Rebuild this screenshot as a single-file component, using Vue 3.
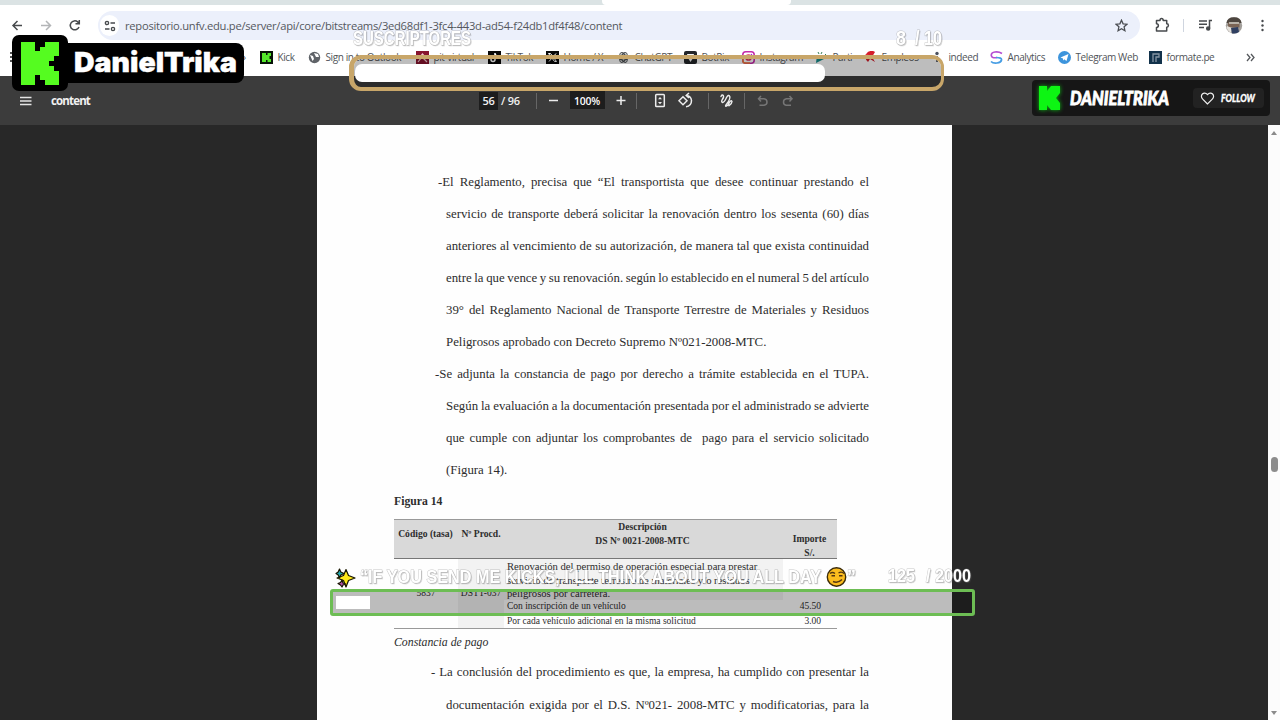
<template>
  <div class="screen">
    <div class="tab-strip"><div class="active-tab"></div></div>

    <header class="browser">
      <div class="nav-row">
        <svg class="nav-icons" width="98" height="40" viewBox="0 0 98 40" fill="none" stroke-width="1.5">
          <path d="M22 20.500H13M17.500 16L13 20.500L17.500 25" stroke="#474a4d" />
          <path d="M41 20.500H50.500M46 16L50.500 20.500L46 25" stroke="#b3b5b7" />
          <path d="M79 22A4.500 4.500 0 1 1 77.700 16.900L79 18.300M79.300 15V18.700H75.500" stroke="#474a4d" />
        </svg>
        <div class="address">
          <span class="site-info">
            <svg width="12" height="12" viewBox="0 0 12 12" fill="none" stroke="#474a4d" stroke-width="1.400">
              <circle cx="3" cy="3" r="1.600" /><path d="M6.500 3H11M1 9H5.500" /><circle cx="9" cy="9" r="1.600" />
            </svg>
          </span>
          <span class="url">repositorio.unfv.edu.pe/server/api/core/bitstreams/3ed68df1-3fc4-443d-ad54-f24db1df4f48/content</span>
          <svg class="star" width="13" height="13" viewBox="0 0 13 13" fill="none" stroke="#4a4d52" stroke-width="1.300">
            <path d="M6.500 1.200L8.100 4.800L12 5.200L9.100 7.800L9.900 11.700L6.500 9.700L3.100 11.700L3.900 7.800L1 5.200L4.900 4.800Z" />
          </svg>
        </div>
        <svg class="tools" width="140" height="40" viewBox="0 0 140 40" fill="none" stroke="#474a4d" stroke-width="1.500">
          <path d="M16.500 15.500H20C20 12.900 23.200 12.900 23.200 15.500H26.700V18.800C29 18.800 29 22.200 26.700 22.200V26H16.500V22.500C19 22.500 19 18.700 16.500 18.700Z" stroke-linejoin="round" />
          <path d="M43.500 14V27" stroke="#cfd5df" stroke-width="1" />
          <path d="M59 16H67M59 19.300H67M59 22.600H64M69.500 23V15.500H72" />
          <circle cx="68.200" cy="23.500" r="1.500" fill="#474a4d" />
          <g stroke="none">
            <circle cx="94" cy="20.500" r="8.200" fill="#a39f9b" />
            <path d="M86.500 18Q87 12.300 94 12.300T101.500 18Z" fill="#4d453f" />
            <rect x="88" y="17.500" width="11.500" height="5" fill="#7b6455" />
            <path d="M87 21L92 23L91 28Q88 26 86.500 23Z" fill="#e5e2dc" />
            <path d="M91 23L98 22L99 27Q96 29 92 28.500Z" fill="#303f61" />
            <path d="M89 17H99V19H89Z" fill="#b9b2a8" />
            <circle cx="122.500" cy="16" r="1.200" fill="#474a4d" />
            <circle cx="122.500" cy="20.500" r="1.200" fill="#474a4d" />
            <circle cx="122.500" cy="25" r="1.200" fill="#474a4d" />
          </g>
        </svg>
      </div>

      <nav class="bookmarks">
        <span class="apps"></span>
        <span class="hidden-mark">›</span>
        <a v-for="b in bookmarks" :key="b.name" class="bookmark" :style="{ width: b.width + 'px' }">
          <svg class="favicon" viewBox="0 0 13 13">
            <template v-if="b.icon === 'kick'">
              <rect width="13" height="13" fill="#071307" />
              <path d="M2 2H6V4H7.500V2H11V5H9.500V8H11V11H7.500V9H6V11H2Z" fill="#53e72a" />
            </template>
            <template v-else-if="b.icon === 'globe'">
              <circle cx="6.500" cy="6.500" r="5.700" fill="#5f6368" />
              <path d="M2 4L5 5L6 8L4.500 10ZM6 2L10 3L11 6L8 6L7 4Z" fill="#fff" />
            </template>
            <template v-else-if="b.icon === 'pit'">
              <rect width="13" height="13" fill="#87142e" />
              <path d="M2 11L6 6L11 11M4 6L6.500 3L9 6" fill="none" stroke="#f0c4ce" stroke-width="1.200" />
            </template>
            <template v-else-if="b.icon === 'tiktok'">
              <rect width="13" height="13" fill="#080808" />
              <path d="M7 2V8.500A2 2 0 1 1 5 6.500M7 3Q8 5 10 5" fill="none" stroke="#fff" stroke-width="1.500" />
            </template>
            <template v-else-if="b.icon === 'x'">
              <rect width="13" height="13" fill="#080808" />
              <path d="M2.500 2.500H4.500L10.500 10.500H8.500ZM10 2.500L3 10.500" fill="none" stroke="#fff" />
            </template>
            <g v-else-if="b.icon === 'gpt'" fill="none" stroke="#44484b">
              <ellipse v-for="r in [0, 60, 120]" :key="r" cx="6.500" cy="6.500" rx="5.300" ry="2.600" :transform="`rotate(${r} 6.500 6.500)`" />
            </g>
            <template v-else-if="b.icon === 'botrix'">
              <rect width="13" height="13" rx="2" fill="#232529" />
              <path d="M3 3H10L9 7L6.500 11L4 7Z" fill="#f4f4f4" />
            </template>
            <template v-else-if="b.icon === 'instagram'">
              <rect x=".8" y=".8" width="11.400" height="11.400" rx="3" fill="#fff" stroke="#c52cab" stroke-width="1.600" />
              <path d="M1 8V10Q1 12 3 12H8" fill="none" stroke="#f48134" stroke-width="1.500" />
              <circle cx="6.500" cy="6.500" r="2.600" fill="none" stroke="#de315d" stroke-width="1.500" />
              <circle cx="9.500" cy="3.500" r=".7" fill="#9c2de0" />
            </template>
            <template v-else-if="b.icon === 'parti'">
              <path d="M2 4L9 8L1 12Z" fill="#168d8c" />
              <path d="M6 3L7 1M8 6L11 3M4 3L3 1" stroke="#397f59" />
            </template>
            <template v-else-if="b.icon === 'empleos'">
              <path d="M11 1A5.500 5.500 0 0 0 4 11L6 8L11 11L8 6Z" fill="#d51c2b" />
              <circle cx="3" cy="5" r="2" fill="#e13038" />
            </template>
            <template v-else-if="b.icon === 'indeed'">
              <circle cx="6" cy="2.500" r="1.700" fill="#4c5260" />
              <path d="M6 5V11" fill="none" stroke="#4c5260" stroke-width="1.700" />
            </template>
            <template v-else-if="b.icon === 'analytics'">
              <path d="M12 2.500Q9 .5 5 1T1.300 4.500T7 6.500" fill="none" stroke="#b54ed3" stroke-width="1.700" />
              <path d="M6 6.500Q12 6.500 11.500 9T7 12T1 10.500" fill="none" stroke="#469de4" stroke-width="1.700" />
            </template>
            <template v-else-if="b.icon === 'telegram'">
              <circle cx="6.500" cy="6.500" r="6.500" fill="#3c94dc" />
              <path d="M2.500 6.500L10.500 3L8.500 10L6.200 8.300L5 9.500V7.500Z" fill="#fff" />
            </template>
            <template v-else>
              <rect width="13" height="13" fill="#12324b" />
              <path d="M4 11V3H10V6H7V11" fill="none" stroke="#8796a5" stroke-width="1.300" />
            </template>
          </svg>
          <span>{{ b.name }}</span>
        </a>
        <svg class="more" width="9" height="9" viewBox="0 0 9 9" fill="none" stroke="#55585c" stroke-width="1.300">
          <path d="M1 1L4 4.500L1 8M5 1L8 4.500L5 8" />
        </svg>
      </nav>
    </header>

    <section class="pdf-bar">
      <svg class="menu" width="12" height="10" viewBox="0 0 12 10" stroke="#e4e4e4" stroke-width="1.500">
        <path d="M0 1.500H11.500M0 5H11.500M0 8.500H11.500" />
      </svg>
      <b class="doc-name">content</b>
      <div class="page-tools">
        <span class="field page-field">56</span>
        <span class="total">/ 96</span>
        <svg width="320" height="26" viewBox="0 0 320 26" fill="none" stroke="#ededed" stroke-width="1.500">
          <g stroke="#666" stroke-width="1"><path d="M8.500 5V21M108.500 5V21M180.500 5V21M216.500 5V21" /></g>
          <path d="M21 12.500H30M88.500 12.500H97.500M93 8V17" />
          <rect x="42" y="3" width="35" height="18" fill="#1d1d1d" stroke="none" />
          <text class="zoom-value" x="46" y="17" textLength="26" lengthAdjust="spacingAndGlyphs">100%</text>
          <rect x="127.700" y="6.500" width="8.600" height="12" rx=".8" />
          <path d="M130 11.200L132 9L134 11.200ZM130 14L134 14L132 16.200Z" fill="#ededed" stroke="none" />
          <path d="M155 8.800L159 12.800L155 16.800L151 12.800Z" />
          <path d="M158.500 7.500Q163 8 163.500 12.500Q163.500 18 158 18.700M161 5L158.200 7.500L161 10" />
          <path d="M193 8.500Q194 6 195.300 7.500Q196.200 9 194.300 11.500Q193 14 194.500 14.500Q196.400 14.500 198.500 9.500Q200.500 6 201.800 8.500Q202.400 11 199 15.500Q197 18 197.800 18.200Q200 18 201.200 14.700Q203 11.500 204 13.500Q204 15.500 201 17.800" stroke-width="1.400" stroke-linecap="round" />
          <g stroke="#767676">
            <path d="M233 8L230.500 10.700L233 13.400M231 10.700H236Q239 11 239 14T236 17.200H231.500" />
            <path d="M261.500 8L264 10.700L261.500 13.400M263.500 10.700H258.500Q255.500 11 255.500 14T258 17.200H263" />
          </g>
        </svg>
      </div>
    </section>

    <main class="viewer">
      <article class="paper">
        <div class="body-text">
          <p v-for="line in lines" :key="line.text" :class="line.kind">{{ line.text }}</p>
        </div>
        <h2>Figura 14</h2>
        <div class="fees">
          <div class="fees-head">
            <span>Código (tasa)</span>
            <span>Nº Procd.</span>
            <span>Descripción<br />DS Nº 0021-2008-MTC</span>
            <span class="amount-head">Importe<br />S/.</span>
          </div>
          <div class="fees-body">
            <div class="code">5837</div>
            <div class="proc">DSTT-037</div>
            <div class="details">
              <div class="permit">Renovación del permiso de operación especial para prestar<br />servicio de transporte terrestre de materiales y/o residuos<br />peligrosos por carretera.</div>
              <div class="small">Con inscripción de un vehículo</div>
              <div class="small last">Por cada vehículo adicional en la misma solicitud</div>
            </div>
            <div class="amounts"><span>45.50</span><span>3.00</span></div>
          </div>
        </div>
        <em class="caption">Constancia de pago</em>
        <div class="closing">
          <p class="dash">- La conclusión del procedimiento es que, la empresa, ha cumplido con presentar la</p>
          <p>documentación exigida por el D.S. Nº021- 2008-MTC y modificatorias, para la</p>
        </div>
      </article>
      <aside class="scrollbar"><i class="up"></i><i class="thumb"></i><i class="down"></i></aside>
    </main>

    <!-- stream overlays -->
    <div class="subs">
      <div class="subs-fill"></div>
    </div>
    <div class="goal"><div class="goal-fill"></div></div>
    <svg class="overlay" width="1280" height="720" viewBox="0 0 1280 720">
      <g class="outlined">
        <text x="353" y="45" font-size="21" textLength="118" lengthAdjust="spacingAndGlyphs">SUSCRIPTORES</text>
        <text x="896" y="45" font-size="21" textLength="10" lengthAdjust="spacingAndGlyphs">8</text>
        <text x="915" y="45" font-size="21" textLength="27" lengthAdjust="spacingAndGlyphs">/ 10</text>
        <text x="360" y="583" font-size="18" textLength="461" lengthAdjust="spacingAndGlyphs">“IF YOU SEND ME KICKS, I´LL THINK ABOUT YOU ALL DAY</text>
        <text x="847" y="583" font-size="18">”</text>
        <text x="888" y="581.500" font-size="18" textLength="27" lengthAdjust="spacingAndGlyphs">125</text>
        <text x="926" y="581.500" font-size="18" textLength="45" lengthAdjust="spacingAndGlyphs">/ 2000</text>
      </g>
      <g stroke="#171500" stroke-width="1.200" stroke-linejoin="round">
        <path d="M346 569.500L348.500 575.500L355 578L348.500 580.500L346 587L343.500 580.500L337 578L343.500 575.500Z" fill="#ffe818" />
        <path d="M339.500 569L340.800 572L344 573.500L340.800 575L339.500 578L338.200 575L336 573.500L338.200 572Z" fill="#27a7b0" />
        <path d="M342 580L343 583L345.500 584L343 585L342 587L340.500 585L338 583.500L340.500 582.500Z" fill="#b34fa7" />
      </g>
      <circle cx="836.500" cy="577" r="9.200" fill="#fcbd1e" stroke="#3b2b08" stroke-width="1.400" />
      <path d="M830 573.500Q832.500 571.500 835 573.500M838.500 573Q841.500 571 844 573.500M831.500 575.800H835M839 575.800H842.500M833 581.500Q838 583.500 842 579.500" fill="none" stroke="#533611" stroke-width="1.400" />
    </svg>

    <div class="streamer">
      <div class="streamer-name">
        <svg width="164" height="36" viewBox="0 0 164 36">
          <text x="0" y="29" textLength="163" lengthAdjust="spacingAndGlyphs">DanielTrika</text>
        </svg>
      </div>
      <div class="streamer-logo">
        <svg width="38" height="43" viewBox="0 0 38 43">
          <path d="M0 0H14V9H19V5H24V0H38V14H33V19H28V24H33V29H38V43H24V38H19V33H14V43H0Z" fill="#55fc20" />
        </svg>
      </div>
    </div>

    <div class="follow-card">
      <svg width="238" height="36" viewBox="0 0 238 36">
        <path class="glow" d="M7 6H15V11L19 6H28V13L24 18L28 23V30H19L15 25V30H7Z" />
        <text class="handle" x="38" y="25" textLength="99" lengthAdjust="spacingAndGlyphs">DANIELTRIKA</text>
        <rect x="161" y="8" width="71" height="20" rx="4" fill="#222" />
        <path d="M175.500 24L170.700 19.200C167 15.500 172 10.500 175.500 14.600C179 10.500 184 15.500 180.300 19.200Z" fill="none" stroke="#eee" stroke-width="1.200" />
        <text class="follow" x="189" y="21.500" textLength="34" lengthAdjust="spacingAndGlyphs">FOLLOW</text>
      </svg>
    </div>
  </div>
</template>

<script setup>
const bookmarks = [
  { name: 'Kick', icon: 'kick', width: 48 },
  { name: 'Sign in to Outlook', icon: 'globe', width: 108 },
  { name: 'pit-virtual', icon: 'pit', width: 72 },
  { name: 'TikTok', icon: 'tiktok', width: 58 },
  { name: 'Home / X', icon: 'x', width: 71 },
  { name: 'ChatGPT', icon: 'gpt', width: 67 },
  { name: 'BotRix', icon: 'botrix', width: 58 },
  { name: 'Instagram', icon: 'instagram', width: 73 },
  { name: 'Parti', icon: 'parti', width: 49 },
  { name: 'Empleos', icon: 'empleos', width: 67 },
  { name: 'indeed', icon: 'indeed', width: 59 },
  { name: 'Analytics', icon: 'analytics', width: 68 },
  { name: 'Telegram Web', icon: 'telegram', width: 91 },
  { name: 'formate.pe', icon: 'formate', width: 97 }
]

const lines = [
  { text: '-El Reglamento, precisa que “El transportista que desee continuar prestando el', kind: 'hang' },
  { text: 'servicio de transporte deberá solicitar la renovación dentro los sesenta (60) días' },
  { text: 'anteriores al vencimiento de su autorización, de manera tal que exista continuidad' },
  { text: 'entre la que vence y su renovación. según lo establecido en el numeral 5 del artículo' },
  { text: '39° del Reglamento Nacional de Transporte Terrestre de Materiales y Residuos' },
  { text: 'Peligrosos aprobado con Decreto Supremo Nº021-2008-MTC.', kind: 'end' },
  { text: '-Se adjunta la constancia de pago por derecho a trámite establecida en el TUPA.', kind: 'hang-more' },
  { text: 'Según la evaluación a la documentación presentada por el administrado se advierte' },
  { text: 'que cumple con adjuntar los comprobantes de  pago para el servicio solicitado' },
  { text: '(Figura 14).', kind: 'end' }
]
</script>

<style>
body {
  margin: 0;
  overflow: hidden;
}
</style>

<style scoped>
.screen {
  position: relative;
  display: flex;
  flex-direction: column;
  width: 1280px;
  height: 720px;
  overflow: hidden;
  background: #fff;
  font-family: "Open Sans", "Noto Sans", sans-serif;
}

.tab-strip {
  height: 5px;
  flex: none;
  padding-left: 602px;
  background: #dbe3e4;
}

.active-tab {
  width: 189px;
  height: 5px;
  background: #fff;
  border-radius: 0 0 4px 4px;
}

.browser {
  height: 71px;
  flex: none;
  border-radius: 8px 8px 0 0;
  background: #fff;
}

.nav-row {
  display: flex;
  height: 41px;
}

.address {
  display: flex;
  align-items: center;
  box-sizing: border-box;
  width: 1042px;
  height: 29px;
  margin-top: 6px;
  padding: 0 12px 0 2px;
  border-radius: 15px;
  background: #ecf0fb;
}

.site-info {
  display: grid;
  place-items: center;
  width: 19px;
  height: 21px;
  border-radius: 11px;
  background: #fff;
}

.url {
  margin-left: 6px;
  font-size: 11.2px;
  letter-spacing: -0.26px;
  color: #55585e;
  white-space: nowrap;
}

.star {
  margin-left: auto;
}

.bookmarks {
  display: flex;
  align-items: center;
  height: 22px;
  font-size: 10px;
  letter-spacing: -0.4px;
  color: #515459;
}

.apps {
  width: 9px;
  height: 10px;
  margin-left: 10px;
  border-left: 2px dotted #555;
}

.hidden-mark {
  width: 17px;
  margin-left: 222px;
}

.bookmark {
  display: flex;
  align-items: center;
  flex: none;
  gap: 4.5px;
  white-space: nowrap;
}

.favicon {
  width: 13px;
  height: 13px;
  flex: none;
}

.pdf-bar {
  display: flex;
  align-items: center;
  flex: none;
  height: 49px;
  background: #3c3c3c;
  color: #f1f1f1;
}

.menu {
  margin-left: 20px;
}

.doc-name {
  width: 409px;
  margin-left: 19px;
  font-size: 11.5px;
  letter-spacing: -0.85px;
}

.page-tools {
  display: flex;
  align-items: center;
  margin-left: 19px;
  font-size: 11px;
  font-weight: 600;
  letter-spacing: -0.2px;
}

.page-field {
  width: 19px;
  height: 18px;
  line-height: 18px;
  text-align: center;
  background: #1d1d1d;
}

.total {
  width: 27px;
  margin-left: 3px;
  white-space: nowrap;
}

.zoom-value {
  fill: #fff;
  stroke: none;
  font-size: 11px;
  font-weight: 600;
}

.viewer {
  display: flex;
  flex: 1;
  min-height: 0;
  padding-left: 317px;
  background: #282828;
}

.paper {
  display: flex;
  flex-direction: column;
  box-sizing: border-box;
  width: 635px;
  height: 595px;
  padding: 40.5px 83px 0 77px;
  overflow: hidden;
  background: #fefefe;
  color: #2d2d2d;
  font-family: "Liberation Serif", serif;
}

.body-text,
.closing {
  flex: none;
  margin-left: 52px;
  font-size: 12.83px;
}

/* tighter base spaces, so the densest lines still fit the column */
.body-text p,
.closing p {
  height: 32.05px;
  margin: 0;
  line-height: 32.05px;
  text-align-last: justify;
  white-space: pre-wrap;
  word-spacing: -1.2px;
}

.body-text .hang {
  margin-left: -8px;
}

.body-text .hang-more {
  margin-left: -11px;
}

.body-text .end {
  text-align-last: left;
  word-spacing: 0;
}

h2 {
  flex: none;
  margin: 8px 0 9.5px;
  font-size: 11.7px;
  line-height: 16px;
}

.fees {
  flex: none;
  box-sizing: border-box;
  width: 443px;
  height: 110px;
  border-top: 1px solid #999;
  border-bottom: 1px solid #999;
}

.fees-head {
  display: grid;
  grid-template-columns: 63px 48px 275px 57px;
  box-sizing: border-box;
  height: 39px;
  border-bottom: 1px solid #777;
  background: #d9d9d9;
  font-size: 9.6px;
  font-weight: bold;
  line-height: 14px;
  text-align: center;
  white-space: nowrap;
}

.fees-head span:nth-child(-n+2) {
  padding-top: 7px;
}

.fees-head .amount-head {
  padding: 12px 0 0 2px;
}

.fees-body {
  display: grid;
  grid-template-columns: 64px 46px 280px 53px;
  height: 69px;
  font-size: 9.5px;
  white-space: nowrap;
}

.code,
.proc {
  padding-top: 29px;
  text-align: center;
}

.proc {
  background: #f2f2f2;
}

.permit {
  box-sizing: border-box;
  height: 41px;
  padding: 0.5px 0 0 3px;
  background: linear-gradient(#f2f2f2, #f2f2f2) 0 0 / 279px 100% no-repeat;
  font-size: 10.65px;
  line-height: 13.6px;
}

.small {
  padding-left: 3px;
  line-height: 12px;
}

.last {
  margin-top: 3px;
}

.amounts {
  display: flex;
  flex-direction: column;
  gap: 3px;
  padding: 41px 16px 0 0;
  line-height: 12px;
  text-align: right;
}

.caption {
  flex: none;
  margin-top: 5px;
  font-size: 11.8px;
  line-height: 16px;
}

.closing {
  margin-top: 6px;
}

.closing .dash {
  margin-left: -15px;
}

.scrollbar {
  display: flex;
  flex-direction: column;
  align-items: center;
  width: 12px;
  margin-left: auto;
  background: #fcfcfc;
}

.up,
.down {
  border: 3px solid transparent;
}

.up {
  margin-top: 3px;
  border-bottom: 4px solid #8a8a8a;
}

.thumb {
  width: 7px;
  height: 15px;
  margin-top: 322px;
  border-radius: 4px;
  background: #8c8c8c;
}

.down {
  margin-top: auto;
  margin-bottom: 2px;
  border-top: 4px solid #8a8a8a;
}

.subs {
  position: absolute;
  left: 349px;
  top: 55px;
  box-sizing: border-box;
  width: 595px;
  height: 36px;
  padding: 5px 1px;
  border: 4px solid #c8a669;
  border-left-width: 5px;
  border-right-width: 3px;
  border-radius: 12px;
  background: rgba(0, 0, 0, 0.26);
  background-clip: padding-box;
}

.subs-fill {
  width: 470px;
  height: 18px;
  border-radius: 7px;
  background: #fff;
}

.goal {
  position: absolute;
  left: 330px;
  top: 589px;
  box-sizing: border-box;
  width: 645px;
  height: 27px;
  padding: 4px 3px;
  border: 3px solid #6dbd54;
  border-radius: 3px;
  background: rgba(0, 0, 0, 0.26);
}

.goal-fill {
  width: 34px;
  height: 13px;
  background: #fff;
}

.overlay {
  position: absolute;
  inset: 0;
}

.outlined {
  fill: #fff;
  stroke: rgba(130, 130, 130, 0.45);
  stroke-width: 1px;
  paint-order: stroke;
  font-family: "Liberation Sans", sans-serif;
  font-weight: bold;
  filter: drop-shadow(1px 1px 0 rgba(90, 90, 90, 0.28));
}

.streamer-name,
.streamer-logo,
.follow-card {
  position: absolute;
}

.streamer-name {
  left: 60px;
  top: 43px;
  width: 170px;
  height: 40px;
  padding-left: 14px;
  border-radius: 8px;
  background: #000;
}

.streamer-name text {
  fill: #fff;
  stroke: #fff;
  stroke-width: 0.4px;
  font-family: Inter, sans-serif;
  font-size: 27.5px;
  font-weight: 900;
}

.streamer-logo {
  left: 12px;
  top: 35px;
  display: grid;
  place-items: center;
  width: 56px;
  height: 56px;
  border-radius: 7px;
  background: #000;
}

.follow-card {
  left: 1032px;
  top: 80px;
  width: 238px;
  height: 36px;
  border-radius: 4px;
  background: #161616;
}

.glow {
  fill: #0df513;
  filter: drop-shadow(0 0 2px #0bb812);
}

.handle,
.follow {
  fill: #fff;
  stroke: #fff;
  stroke-width: 0.8px;
  font-family: Lato, sans-serif;
  font-style: italic;
  font-weight: 900;
}

.handle {
  font-size: 18px;
}

.follow {
  stroke-width: 0.3px;
  font-size: 10.5px;
}
</style>
